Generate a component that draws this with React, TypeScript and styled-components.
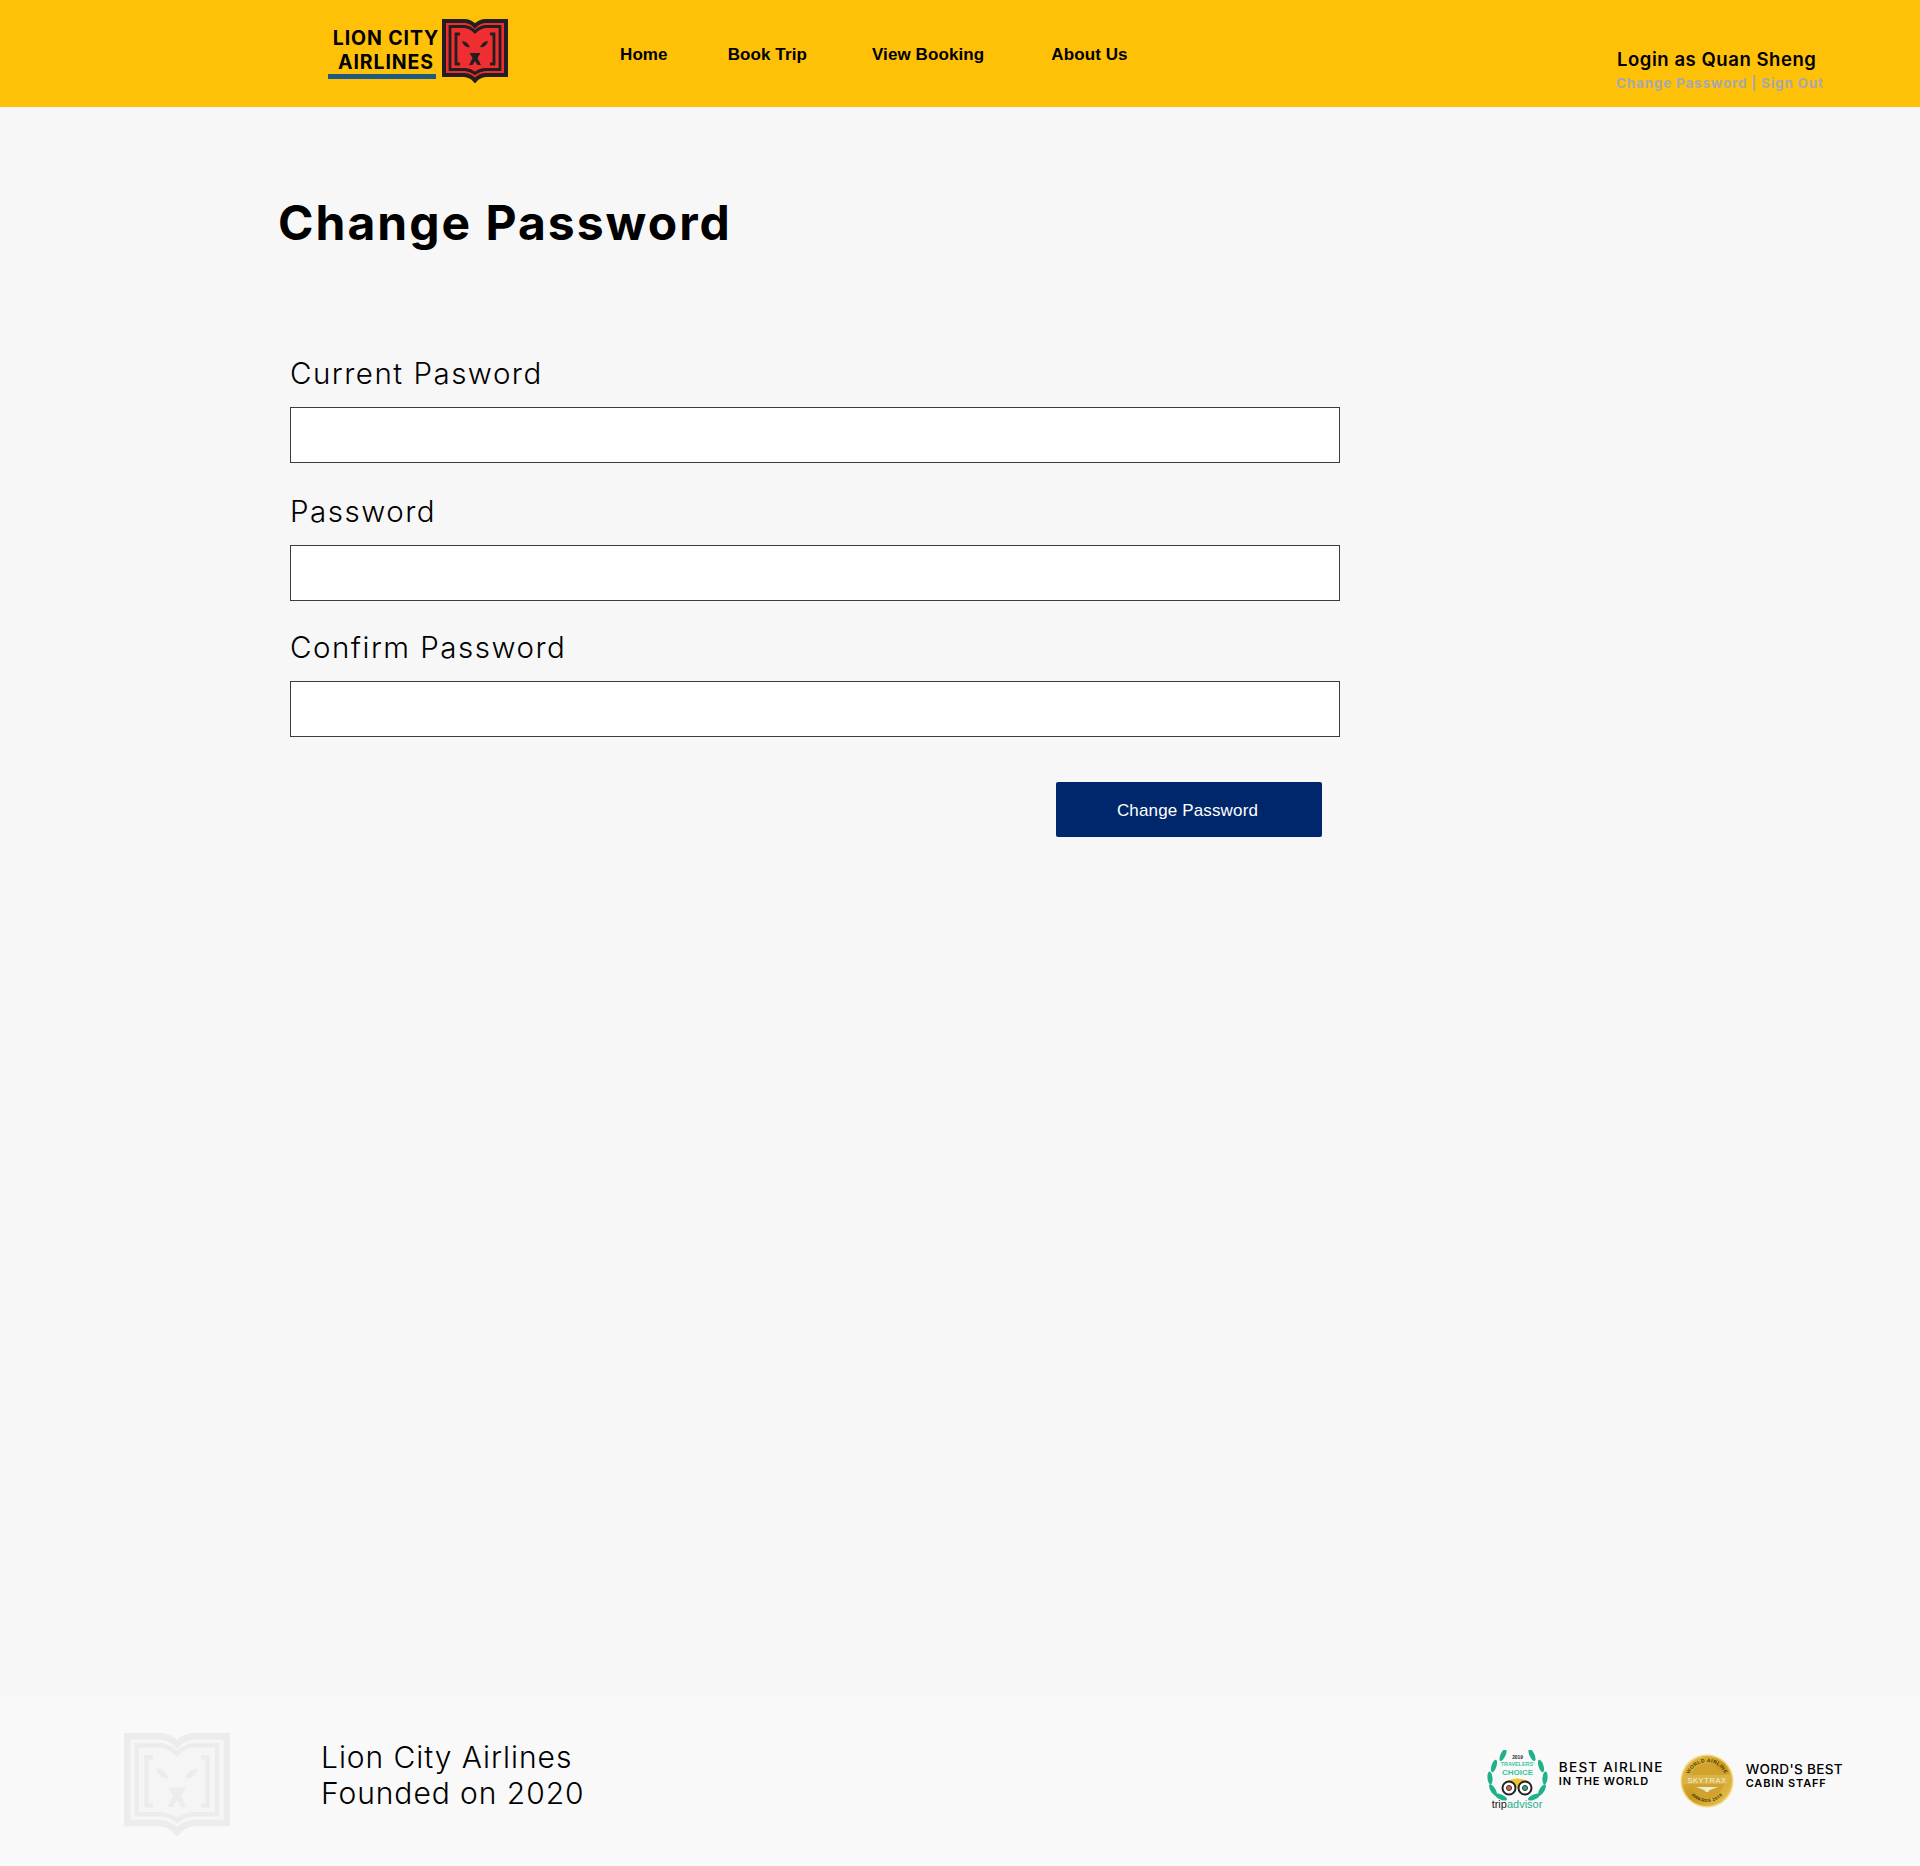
import React from 'react'
import styled, { createGlobalStyle } from 'styled-components'

const DISPLAY_FONT = `Inter, "Open Sans", sans-serif`
const NAV_FONT = `"Liberation Sans", Arial, sans-serif`

const GlobalStyle = createGlobalStyle`
  html, body {
    margin: 0;
    padding: 0;
    background: #f7f7f7;
  }
`

const Page = styled.div`
  display: flex;
  flex-direction: column;
  min-height: 1866px;
  font-family: ${DISPLAY_FONT};
  color: #000;
`

const Header = styled.header`
  display: flex;
  align-items: flex-start;
  height: 107px;
  background: #ffc107;
  padding-left: 328px;
  box-sizing: border-box;
`

const Brand = styled.div`
  display: flex;
  width: 292px;
  margin-top: 19px;
`

const BrandText = styled.div`
  display: flex;
  flex-direction: column;
  align-items: center;
  width: 108px;
  margin-right: 6px;
  padding-top: 7px;
`

const BrandLine = styled.span`
  margin-left: 8px;
  font-size: 19.5px;
  line-height: 24px;
  font-weight: 700;
  letter-spacing: 0.9px;
  white-space: nowrap;
`

const BrandRule = styled.span`
  display: block;
  width: 108px;
  height: 5px;
  background: #1f5a80;
`

const Nav = styled.nav`
  display: flex;
  margin-top: 45px;
`

const NavLink = styled.a<{ $gap: number }>`
  margin-right: ${({ $gap }) => $gap}px;
  font-family: ${NAV_FONT};
  font-size: 17px;
  line-height: 19px;
  font-weight: 700;
  letter-spacing: 0.1px;
  color: #000;
  text-decoration: none;
  white-space: nowrap;
`

const Account = styled.div`
  margin-left: auto;
  margin-right: 95px;
  padding-top: 47px;
  width: 209px;
`

const AccountName = styled.div`
  font-size: 18.5px;
  line-height: 24px;
  font-weight: 600;
  letter-spacing: 0.55px;
  padding-left: 1px;
  white-space: nowrap;
`

const AccountLinks = styled.div`
  margin-top: 3px;
  font-size: 13.6px;
  line-height: 18px;
  font-weight: 700;
  letter-spacing: 0.75px;
  color: #a9a9ab;
  white-space: nowrap;
`

const Main = styled.main`
  flex: 1;
  padding: 82px 0 0 278px;
`

const Title = styled.h1`
  margin: 0 0 98px;
  font-size: 48px;
  line-height: 68px;
  font-weight: 700;
  letter-spacing: 2px;
`

const Form = styled.form`
  display: flex;
  flex-direction: column;
  width: 1050px;
  margin-left: 12px;
`

const Field = styled.div<{ $gap: number }>`
  display: flex;
  flex-direction: column;
  margin-bottom: ${({ $gap }) => $gap}px;
`

const Label = styled.label`
  margin-bottom: 16px;
  font-size: 29.5px;
  line-height: 36px;
  font-weight: 300;
  letter-spacing: 1.5px;
`

const Input = styled.input`
  display: block;
  width: 100%;
  height: 56px;
  box-sizing: border-box;
  background: #fff;
  border: 1px solid #3c3c3c;
  border-radius: 0;
  outline: none;
`

const Actions = styled.div`
  display: flex;
  justify-content: flex-end;
  padding-right: 18px;
  margin-top: 45px;
`

const SubmitButton = styled.button`
  width: 266px;
  height: 55px;
  padding: 3px 3px 0 0;
  background: #00266b;
  border: 0;
  border-radius: 2px;
  color: #fff;
  font-family: ${NAV_FONT};
  font-size: 17px;
  letter-spacing: 0.15px;
`

const Footer = styled.footer`
  display: flex;
  align-items: flex-start;
  height: 170px;
  background: #f9f9f9;
  padding-left: 124px;
  box-sizing: border-box;
`

const FooterLogo = styled.div`
  width: 197px;
  margin-top: 37px;
`

const FooterText = styled.div`
  margin-top: 43px;
  font-size: 30px;
  line-height: 36px;
  font-weight: 300;
  letter-spacing: 0.95px;
  white-space: nowrap;
`

const Awards = styled.div`
  display: flex;
  margin-left: auto;
  margin-right: 77px;
  margin-top: 52px;
`

const Award = styled.div<{ $gap: number; $inner: number }>`
  display: flex;
  align-items: center;
  gap: ${({ $inner }) => $inner}px;
  height: 66px;
  margin-left: ${({ $gap }) => $gap}px;
`

const AwardText = styled.div<{ $offset: number }>`
  display: flex;
  flex-direction: column;
  margin-top: ${({ $offset }) => $offset}px;
  white-space: nowrap;
`

const AwardHead = styled.span<{ $track: number }>`
  font-size: 13.6px;
  line-height: 15px;
  font-weight: 500;
  letter-spacing: ${({ $track }) => $track}px;
`

const AwardSub = styled.span`
  font-size: 11px;
  line-height: 13px;
  font-weight: 600;
  letter-spacing: 0.85px;
`

type BookProps = { line: string; fill: string; gap: string; width: number; height: number }

const BookLogo = ({ line, fill, gap, width, height }: BookProps) => (
  <svg width={width} height={height} viewBox="0 0 66 64" aria-hidden="true">
    <path
      d="M2 2H23Q29 2.500 33 7Q37 2.500 43 2H64V56H44Q37 56.500 33 61.500Q29 56.500 22 56H2Z"
      fill={gap}
      stroke={line}
      strokeWidth="4"
    />
    <path
      d="M8 7.500H23Q29 8.500 33 13Q37 8.500 43 7.500H58V50.500H43Q37 51 33 54.500Q29 51 23 50.500H8Z"
      fill={fill}
      stroke={line}
      strokeWidth="2.800"
    />
    <path
      d="M18 15H14V45H18M48 15H52V45H48"
      fill="none"
      stroke={line}
      strokeWidth="2.800"
    />
    <path d="M20 22Q25 22 28 28Q22 29 20 22ZM46 22Q41 22 38 28Q44 29 46 22Z" fill={line} />
    <path
      d="M27.500 34H38.500L35.500 39L39 46H35.500L33 42L30.500 46H27L30.500 39Z"
      fill={line}
    />
  </svg>
)

const TripAdvisorBadge = () => {
  const leaves = [
    [17, 5, -65], [8, 16, -72], [4, 28, -95], [7, 40, 60], [15, 47, 25],
  ]
  return (
    <svg width="64" height="62" viewBox="0 0 64 62" aria-hidden="true">
      {leaves.map(([x, y, r]) => (
        <g key={`${x}-${y}`}>
          <ellipse cx={x} cy={y} rx="6.500" ry="2.500" fill="#1fb18a" transform={`rotate(${r} ${x} ${y})`} />
          <ellipse cx={63 - x} cy={y} rx="6.500" ry="2.500" fill="#1fb18a" transform={`rotate(${-r} ${63 - x} ${y})`} />
        </g>
      ))}
      <text x="31.500" y="9" textAnchor="middle" fontFamily={NAV_FONT} fontSize="4.800" fontWeight="700" fill="#222">2019</text>
      <text x="31.500" y="16" textAnchor="middle" fontFamily={NAV_FONT} fontSize="5.400" fontWeight="700" fill="#3cc3a0">TRAVELERS'</text>
      <text x="31.500" y="25" textAnchor="middle" fontFamily={NAV_FONT} fontSize="8" fontWeight="700" fill="#3cc3a0">CHOICE</text>
      <path d="M21 31Q31 26 42 31L31.500 38Z" fill="#f2c230" />
      <circle cx="23" cy="38" r="6.500" fill="#fff" stroke="#222" strokeWidth="2" />
      <circle cx="39" cy="38" r="6.500" fill="#fff" stroke="#222" strokeWidth="2" />
      <circle cx="23" cy="38" r="2.500" fill="#e2604a" stroke="#333" />
      <circle cx="39" cy="38" r="2.500" fill="#1fb18a" stroke="#333" />
      <text x="31" y="58" textAnchor="middle" fontFamily={NAV_FONT} fontSize="11" fill="#222">
        trip<tspan fill="#1fb18a">advisor</tspan>
      </text>
    </svg>
  )
}

const SkytraxBadge = () => (
  <svg width="54" height="54" viewBox="0 0 54 54" aria-hidden="true">
    <defs>
      <linearGradient id="skytrax-gold" x1="0" y1="0" x2="1" y2="1">
        <stop offset="0" stopColor="#e9c24a" />
        <stop offset="0.5" stopColor="#c9981f" />
        <stop offset="1" stopColor="#edc95a" />
      </linearGradient>
      <path id="skytrax-top" d="M8 27A19 19 0 0 1 46 27" />
      <path id="skytrax-bottom" d="M6 27A21 21 0 0 0 48 27" />
    </defs>
    <circle cx="27" cy="27" r="26.500" fill="#f3d77a" />
    <circle cx="27" cy="27" r="25" fill="url(#skytrax-gold)" />
    <circle cx="27" cy="27" r="17" fill="#d1a22c" />
    <text fontFamily={NAV_FONT} fontSize="5" fontWeight="700" fill="#4a3608" letterSpacing="0.4">
      <textPath href="#skytrax-top" startOffset="50%" textAnchor="middle">WORLD AIRLINE</textPath>
    </text>
    <text fontFamily={NAV_FONT} fontSize="4.500" fontWeight="700" fill="#4a3608" letterSpacing="0.4">
      <textPath href="#skytrax-bottom" startOffset="50%" textAnchor="middle">AWARDS 2019</textPath>
    </text>
    <rect x="3" y="21" width="48" height="9" fill="#d9b347" />
    <text x="27" y="28.500" textAnchor="middle" fontFamily={NAV_FONT} fontSize="7.500" fill="#f7f0d8" letterSpacing="0.6">SKYTRAX</text>
    <path d="M16 33H38L30 36H24Z" fill="#f0ead2" />
    <circle cx="27" cy="35.500" r="2.500" fill="#f0ead2" />
  </svg>
)

const App = () => (
  <Page>
    <GlobalStyle />
    <Header>
      <Brand>
        <BrandText>
          <BrandLine>LION CITY</BrandLine>
          <BrandLine>AIRLINES</BrandLine>
          <BrandRule />
        </BrandText>
        <BookLogo line="#231f20" fill="#ee2e30" gap="#ee2e30" width={66} height={64} />
      </Brand>
      <Nav>
        <NavLink href="#" $gap={60}>Home</NavLink>
        <NavLink href="#" $gap={65}>Book Trip</NavLink>
        <NavLink href="#" $gap={67}>View Booking</NavLink>
        <NavLink href="#" $gap={0}>About Us</NavLink>
      </Nav>
      <Account>
        <AccountName>Login as Quan Sheng</AccountName>
        <AccountLinks>Change Password | Sign Out</AccountLinks>
      </Account>
    </Header>
    <Main>
      <Title>Change Password</Title>
      <Form>
        <Field $gap={30}>
          <Label>Current Pasword</Label>
          <Input type="password" />
        </Field>
        <Field $gap={28}>
          <Label>Password</Label>
          <Input type="password" />
        </Field>
        <Field $gap={0}>
          <Label>Confirm Password</Label>
          <Input type="password" />
        </Field>
        <Actions>
          <SubmitButton type="button">Change Password</SubmitButton>
        </Actions>
      </Form>
    </Main>
    <Footer>
      <FooterLogo>
        <BookLogo line="#ececec" fill="#f5f5f5" gap="#f6f6f6" width={106} height={103} />
      </FooterLogo>
      <FooterText>
        Lion City Airlines
        <br />
        Founded on 2020
      </FooterText>
      <Awards>
        <Award $gap={0} $inner={9}>
          <TripAdvisorBadge />
          <AwardText $offset={-14}>
            <AwardHead $track={1.2}>BEST AIRLINE</AwardHead>
            <AwardSub>IN THE WORLD</AwardSub>
          </AwardText>
        </Award>
        <Award $gap={16} $inner={12}>
          <SkytraxBadge />
          <AwardText $offset={-10}>
            <AwardHead $track={0.3}>WORD'S BEST</AwardHead>
            <AwardSub>CABIN STAFF</AwardSub>
          </AwardText>
        </Award>
      </Awards>
    </Footer>
  </Page>
)

export default App
